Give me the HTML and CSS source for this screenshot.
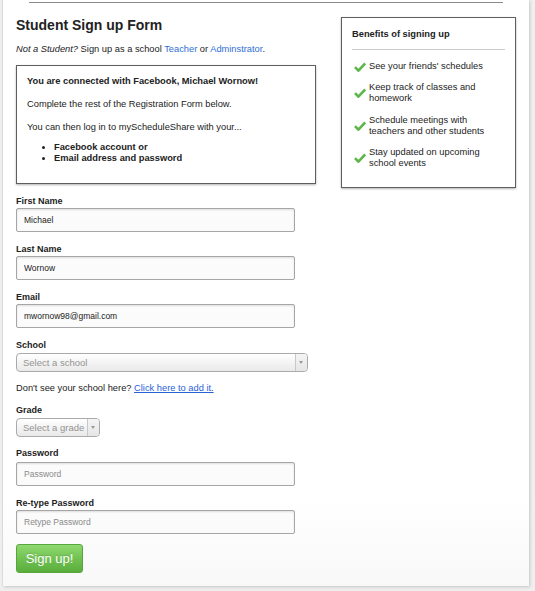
FILE: index.html
```html
<!DOCTYPE html>
<html>
<head>
<meta charset="utf-8">
<title>Student Sign up Form</title>
<link rel="stylesheet" href="styles.css">
</head>
<body>
<div class="card">
  <div class="topline"></div>
  <div class="layout">
    <div class="main">
      <h1 class="title">Student Sign up Form</h1>
      <p class="note"><em>Not a Student?</em> Sign up as a school <a href="#" class="link">Teacher</a> or <a href="#" class="link">Adminstrator</a>.</p>
      <div class="fbbox">
        <p class="fb-title">You are connected with Facebook, Michael Wornow!</p>
        <p class="fb-text">Complete the rest of the Registration Form below.</p>
        <p class="fb-text">You can then log in to myScheduleShare with your...</p>
        <ul class="fb-list">
          <li>Facebook account or</li>
          <li>Email address and password</li>
        </ul>
      </div>
      <form class="form">
        <label class="label">First Name</label>
        <input class="input" type="text" value="Michael">
        <label class="label">Last Name</label>
        <input class="input" type="text" value="Wornow">
        <label class="label">Email</label>
        <input class="input" type="text" value="mwornow98@gmail.com">
        <label class="label label-select">School</label>
        <div class="select select-school"><span class="select-text">Select a school</span><span class="select-arrow"></span></div>
        <p class="addschool">Don't see your school here? <a href="#" class="link link-u">Click here to add it.</a></p>
        <label class="label label-select">Grade</label>
        <div class="select select-grade"><span class="select-text">Select a grade</span><span class="select-arrow"></span></div>
        <label class="label label-pw">Password</label>
        <input class="input" type="password" placeholder="Password">
        <label class="label">Re-type Password</label>
        <input class="input" type="password" placeholder="Retype Password">
        <button type="button" class="btn">Sign up!</button>
      </form>
    </div>
    <aside class="benefits">
      <h2 class="benefits-title">Benefits of signing up</h2>
      <ul class="benefits-list">
        <li class="benefit"><svg class="check" viewBox="0 0 12 10" width="12" height="10"><path d="M1 5.2 L4.4 8.6 L11.2 1.4" fill="none" stroke="#5db64a" stroke-width="2.6"/></svg><span class="benefit-text">See your friends' schedules</span></li>
        <li class="benefit"><svg class="check" viewBox="0 0 12 10" width="12" height="10"><path d="M1 5.2 L4.4 8.6 L11.2 1.4" fill="none" stroke="#5db64a" stroke-width="2.6"/></svg><span class="benefit-text">Keep track of classes and homework</span></li>
        <li class="benefit benefit-gap"><svg class="check" viewBox="0 0 12 10" width="12" height="10"><path d="M1 5.2 L4.4 8.6 L11.2 1.4" fill="none" stroke="#5db64a" stroke-width="2.6"/></svg><span class="benefit-text">Schedule meetings with teachers and other students</span></li>
        <li class="benefit"><svg class="check" viewBox="0 0 12 10" width="12" height="10"><path d="M1 5.2 L4.4 8.6 L11.2 1.4" fill="none" stroke="#5db64a" stroke-width="2.6"/></svg><span class="benefit-text">Stay updated on upcoming school events</span></li>
      </ul>
    </aside>
  </div>
</div>
</body>
</html>
```
FILE: styles.css
```css
html, body {
  margin: 0;
  padding: 0;
}
body {
  background: #efefef;
  font-family: "Liberation Sans", Arial, Helvetica, sans-serif;
  color: #222;
  font-size: 9.3px;
  width: 535px;
  height: 591px;
  overflow: hidden;
}
.card {
  margin-left: 3px;
  width: 526px;
  height: 584px;
  padding-top: 2px;
  background: linear-gradient(to bottom, #ffffff 85%, #f8f8f8 100%);
  box-shadow: 1px 1px 3px rgba(0,0,0,0.18), -1px 0 0 #e2e2e2;
}
.topline {
  margin-left: 26px;
  width: 474px;
  border-top: 1px solid #8a8a8a;
}
.layout {
  display: flex;
  align-items: flex-start;
  padding-left: 13px;
  gap: 25px;
}
.main {
  width: 300px;
}
.title {
  margin: 12px 0 0 0;
  font-size: 14px;
  line-height: 20px;
  font-weight: bold;
  color: #222;
}
.note {
  margin: 7px 0 0 0;
  font-size: 9.3px;
  line-height: 14px;
}
.link {
  color: #2f6fd6;
  text-decoration: none;
}
.link-u {
  text-decoration: underline;
  color: #2a62d6;
}
.fbbox {
  margin-top: 9px;
  border: 1px solid #5e5e5e;
  box-shadow: 0 1px 2px rgba(0,0,0,0.3);
  padding: 9px 10px 19px 10px;
  height: 89px;
}
.fb-title {
  margin: 0;
  font-weight: bold;
  line-height: 12px;
}
.fb-text {
  margin: 11px 0 0 0;
  line-height: 12px;
}
.fb-list {
  margin: 9px 0 0 0;
  padding-left: 27px;
  font-weight: bold;
  line-height: 11px;
}
.form {
  display: flex;
  flex-direction: column;
  align-items: flex-start;
  margin-top: 11px;
}
.label {
  font-size: 9px;
  font-weight: bold;
  line-height: 12px;
  margin-bottom: 1px;
}
.label-select {
  margin-bottom: 2px;
}
.label-pw {
  margin-top: 0;
  margin-bottom: 3px;
}
.input {
  box-sizing: border-box;
  width: 279px;
  height: 24px;
  margin: 0 0 11px 0;
  padding: 0 7px;
  border: 1px solid #a6a6a6;
  border-radius: 2px;
  background: #fbfbfb;
  box-shadow: inset 0 1px 2px rgba(0,0,0,0.12);
  font-family: "Liberation Sans", Arial, Helvetica, sans-serif;
  font-size: 8.5px;
  color: #222;
  outline: none;
}
.input::placeholder {
  color: #8a8a8a;
}
.select {
  box-sizing: border-box;
  display: flex;
  align-items: stretch;
  height: 19px;
  border: 1px solid #aaa;
  border-radius: 4px;
  background: linear-gradient(to bottom, #ffffff 0%, #f4f4f4 50%, #e9e9e9 100%);
  color: #939393;
  font-size: 9.5px;
}
.select-school {
  width: 292px;
  margin-bottom: 10px;
}
.select-grade {
  width: 84px;
  margin-bottom: 10px;
}
.select-text {
  flex: 1;
  display: flex;
  align-items: center;
  padding-left: 6px;
}
.select-arrow {
  width: 11px;
  border-left: 1px solid #c8c8c8;
  background: linear-gradient(to bottom, #f4f4f4, #e6e6e6);
  border-radius: 0 3px 3px 0;
  position: relative;
}
.select-arrow::after {
  content: "";
  position: absolute;
  left: 3px;
  top: 7px;
  border-left: 2.5px solid transparent;
  border-right: 2.5px solid transparent;
  border-top: 3px solid #999;
}
.addschool {
  margin: 0 0 10px 0;
  line-height: 12px;
}
.btn {
  box-sizing: border-box;
  width: 67px;
  height: 29px;
  padding: 0;
  margin-top: -1px;
  border: 1px solid #56a63c;
  border-radius: 3px;
  background: linear-gradient(to bottom, #90d870 0%, #71c252 50%, #5aad3d 100%);
  color: #fff;
  font-family: "Liberation Sans", Arial, Helvetica, sans-serif;
  font-size: 13px;
  text-shadow: 0 -1px 0 rgba(0,0,0,0.15);
}
.benefits {
  box-sizing: border-box;
  width: 175px;
  margin-top: 14px;
  border: 1px solid #5e5e5e;
  box-shadow: 0 1px 2px rgba(0,0,0,0.3);
  padding: 10px 10px 19px 10px;
  height: 171px;
}
.benefits-title {
  margin: 0;
  font-size: 9.3px;
  line-height: 12px;
  font-weight: bold;
  color: #222;
  padding-bottom: 9px;
  border-bottom: 1px solid #cccccc;
}
.benefits-list {
  list-style: none;
  margin: 11px 0 0 0;
  padding: 0;
}
.benefit {
  display: flex;
  align-items: center;
  line-height: 11px;
  margin-bottom: 10px;
}
.benefit:nth-child(2) {
  margin-bottom: 11px;
}
.benefit-text {
  max-width: 125px;
}
.check {
  flex: none;
  margin-left: 2px;
  margin-right: 3px;
}
```
